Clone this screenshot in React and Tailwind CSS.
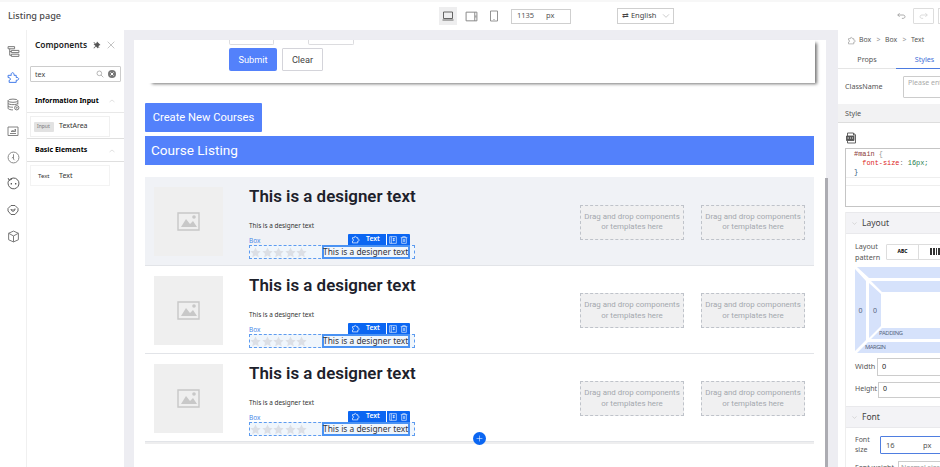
import React from "react";

const S = ({ children, w = 12, h = w, vb = "0 0 24 24", c = "", sw = 1.8 }) => (
  <svg width={w} height={h} viewBox={vb} fill="none" stroke="currentColor" strokeWidth={sw} className={"shrink-0 " + c}>
    {children}
  </svg>
);

const PUZZLE = "M4 7h5c-1-4 5-5 5 0h4v4c5-1 5 6 0 5v5H4v-5c4 0 4-5 0-5z";
const Puzzle = (p) => <S {...p}><path d={PUZZLE} /></S>;

const railIcons = [
  <S w={13} c="text-[#777]"><path d="M2 3h12v4H2zM8 10h14v4H8zM8 17h14v4H8zM5 7v12h3M5 12h3" /></S>,
  <S w={13} c="text-[#3f78e8]"><path d="M2 8h6c-2-6 6-7 5 0h4v4c6-1 6 6 0 5v4H4v-4c4 0 3-5-2-5z" /></S>,
  <S w={13} c="text-[#777]"><ellipse cx="11" cy="5" rx="9" ry="3" /><path d="M2 5v14c0 2 5 3 9 3M20 5v7M2 10c2 3 16 3 18 0M2 15c2 2 6 2 9 2" /><circle cx="18" cy="18" r="4" /><circle cx="18" cy="18" r="1" /></S>,
  <S w={12} c="text-[#777]"><path d="M2 4h20v17H2zM6 17h12M8 13l3-2 2 1 4-4v5z" /></S>,
  <S w={13} c="text-[#888]"><circle cx="12" cy="12" r="10" /><path d="M12 6v9M12 11l-3 2M12 15l2 2" /></S>,
  <S w={13} c="text-[#555]"><path d="M4 6a10 10 0 1 1-1 10C1 11 2 8 4 6zM2 2l2 4 5-2" /><path d="M8 11v3M16 11v3" strokeWidth="2.4" /></S>,
  <S w={12} c="text-[#555]"><path d="M8 3h8l6 6v5l-6 7H8l-6-7V9z" /><path d="M8 10c0 6 8 6 8 0M9 10l3 3 4-4" /></S>,
  <S w={13} c="text-[#777]"><path d="M12 2l9 4v12l-9 4-9-4V6zM3 6l9 5 9-5M12 11v11" /></S>,
];

function Header() {
  return (
    <header className="flex h-[30px] shrink-0 items-center border-t-2 border-[#f7f7f7] bg-white">
      <div className="w-[438px] shrink-0 pl-2 text-[9.1px] font-medium text-[#4a4a4a]">Listing page</div>
      <div className="ml-px flex h-[18px] w-[18px] shrink-0 items-center justify-center bg-[#eeeeef] text-[#555]">
        <S w={12}><path d="M3 4h18v13H3zM1 20h22" /></S>
      </div>
      <S w={13} c="ml-2 text-[#888]"><path d="M2 4h20v16H2zM18 4v16M20 10v4" /></S>
      <S w={12} c="ml-[10px] text-[#888]"><path d="M5 2h14v20H5zM11 19h2" /></S>
      <div className="ml-[11px] flex h-[15px] w-[60px] shrink-0 items-center border border-[#cfcfcf] pl-[5px] text-[7.5px] text-[#555]">
        <span className="w-[29px]">1135</span><span>px</span>
      </div>
      <div className="ml-[46px] flex h-4 w-[57px] shrink-0 items-center border border-[#cfcfcf] pl-1 text-[7.5px] text-[#444]">
        <span className="w-[40px] whitespace-nowrap">⇄ English</span>
        <S w={8} c="text-[#aaa]"><path d="M3 7l9 9 9-9" /></S>
      </div>
      <S w={9} c="ml-[223px] text-[#888]"><path d="M7 3L2 8l5 5M2 8h14c7 0 7 9 0 9h-3" /></S>
      <div className="ml-[7px] flex h-4 w-[21px] shrink-0 items-center justify-center rounded-[1px] border border-[#ddd] text-[#ccc]">
        <S w={9}><path d="M17 3l5 5-5 5M22 8H8c-7 0-7 9 0 9h3" /></S>
      </div>
      <div className="ml-[4px] h-4 w-4 shrink-0 border border-[#ddd]" />
    </header>
  );
}

const Caret = () => <S w={6} c="text-[#bbb]"><path d="M2 16l10-8 10 8" /></S>;

function ComponentsPanel() {
  return (
    <aside className="flex w-[98px] shrink-0 flex-col border-l border-[#f0f0f0] bg-white">
      <div className="mt-[6px] flex h-[17px] items-center pl-2">
        <span className="w-[58px] shrink-0 pt-px text-[8.4px] font-semibold text-[#222]">Components</span>
        <svg width="8" height="8" viewBox="0 0 16 16" fill="#555" className="shrink-0"><path d="M8 1l7 7-3 1-2 3v3L6 11l-4 4-1-1 4-4-4-4h4l2-2zM2 2l11 11-1 1L1 3z" /></svg>
        <S w={8} sw={1.5} c="ml-[6px] text-[#888]"><path d="M2 2l20 20M22 2L2 22" /></S>
      </div>
      <div className="mx-[3px] mt-[13px] flex h-[16px] items-center rounded-[1px] border border-[#ccc] pl-1 text-[7.1px] text-[#444]">
        <span className="w-[61px]">tex</span>
        <S w={8} c="text-[#888]"><circle cx="10" cy="10" r="7" /><path d="M15 15l7 7" /></S>
        <svg width="8" height="8" viewBox="0 0 16 16" className="ml-[4px] shrink-0"><circle cx="8" cy="8" r="8" fill="#777" /><path d="M5 5l6 6M11 5l-6 6" stroke="white" strokeWidth="2" /></svg>
      </div>
      <div className="mt-[6px] flex h-[25px] items-center justify-between border-b border-[#e8e8e8] pl-2 pr-[9px] pt-[2px] text-[7px] font-bold text-black">
        <span className="whitespace-nowrap">Information Input</span><Caret />
      </div>
      <div className="ml-[3px] mt-[3px] flex h-[21px] w-[80px] items-center border border-[#f0f0f0] pl-[3px] text-[7px] text-[#333]">
        <span className="mr-[5px] flex h-[10px] w-5 items-center rounded-[1px] bg-[#e2e2e2] pl-[3px] text-[5px] text-[#777]">Input</span>TextArea
      </div>
      <div className="mt-[1px] flex h-[24px] items-center justify-between border-b border-t border-[#dfdfdf] pl-2 pr-[9px] pt-px text-[7px] font-bold text-black">
        <span>Basic Elements</span><Caret />
      </div>
      <div className="ml-[3px] mt-[3px] flex h-[21px] w-[80px] items-center border border-[#f3f3f3] pl-[7px] pt-px text-[7px] text-[#333]">
        <span className="w-[21px] text-[6px]">Text</span>Text
      </div>
    </aside>
  );
}

const Star = () => <svg width="11" height="11" viewBox="0 0 24 24" fill="#dcdfe5"><path d="M12 1l3.4 7.2 7.8 1-5.7 5.4 1.5 7.8-7-3.8-7 3.8 1.5-7.8L.8 9.2l7.8-1z" /></svg>;

const Drop = () => (
  <div className="flex h-[35px] w-[104px] items-center justify-center border border-dashed border-[#bfc3ca] bg-[#f0f0f1] text-center text-[7.9px] leading-[10.5px] text-[#a4a8ae]">
    <span className="whitespace-nowrap">Drag and drop components<br />or templates here</span>
  </div>
);

function Course({ active }) {
  return (
    <div className={"flex shrink-0 border-b border-[#e2e4e8] pl-[9px] " + (active ? "h-[89px] bg-[#f0f2f6]" : "h-[88px] bg-white")}>
      <div className="mt-[10px] flex h-[69px] w-[69px] shrink-0 items-center justify-center bg-[#efefef]">
        <svg width="23" height="19" viewBox="0 0 23 19" fill="none"><path d="M1 1h21v17H1z" stroke="#c8c8c8" strokeWidth="1.4" /><path d="M4 15l5-8 4 5 3-3 4 6z" fill="#c8c8c8" /><circle cx="17" cy="5" r="1.8" fill="#c8c8c8" /></svg>
      </div>
      <div className="ml-[26px] w-[166px] shrink-0">
        <h2 className="mt-[8px] whitespace-nowrap text-[16.9px] font-semibold leading-[23px] text-[#1d212b]">This is a designer text</h2>
        <p className="mt-[13px] whitespace-nowrap font-['Noto_Sans',sans-serif] text-[6.4px] leading-[10px] text-[#333]">This is a designer text</p>
        <div className="flex h-[14px] items-end justify-between font-['Noto_Sans',sans-serif]">
          <span className="text-[6.5px] leading-[9px] text-[#4a8ae8]">Box</span>
          <div className="mr-[5px] flex h-[11px] w-[62px] items-center rounded-t-[1px] bg-[#0b66f2] text-[6.8px] font-semibold text-white">
            <Puzzle w={9} c="ml-[3px]" />
            <span className="ml-[6px] w-[19px]">Text</span>
            <span className="ml-px h-[11px] w-px bg-white" />
            <S w={8} c="ml-[2px]"><path d="M2 2h20v20H2zM7 2v20M11 8h7M11 13h7M14 6v10" /></S>
            <S w={8} c="ml-[3px]"><path d="M2 5h20M8 5V2h8v3M5 5v17h14V5M10 9v9M14 9v9" /></S>
          </div>
        </div>
        <div className="flex h-[14px] items-center border border-dashed border-[#5c9bf0] bg-[#f0f6fc]">
          <div className="flex w-[72px] shrink-0 gap-[0.5px]"><Star /><Star /><Star /><Star /><Star /></div>
          <div className="flex h-[14px] w-[88px] shrink-0 items-center whitespace-nowrap border-2 border-[#4a92f3] font-['Noto_Sans',sans-serif] text-[8.4px] text-[#30343c]"><span className="-ml-px">This is a designer text</span></div>
        </div>
      </div>
      <div className={"ml-auto mr-[9px] flex gap-[17px] " + (active ? "mt-[27.5px]" : "mt-[27px]")}><Drop /><Drop /></div>
    </div>
  );
}

function Canvas() {
  return (
    <main className="relative mt-[10px] flex w-[692px] shrink-0 flex-col bg-white font-['Roboto',sans-serif]">
      <section className="ml-[14px] h-[43px] w-[667px] shrink-0 bg-white pl-[81px] shadow-[3px_2px_3px_-1px_#777]">
        <div className="flex gap-[34px]">
          <div className="h-[5px] w-[45px] rounded-b-[2px] border border-t-0 border-[#dcdcdf]" />
          <div className="h-[5px] w-[46px] rounded-b-[2px] border border-t-0 border-[#dcdcdf]" />
        </div>
        <div className="mt-[3px] flex gap-[5px] text-[9.2px]">
          <button className="h-[23px] w-[48px] rounded-[2px] bg-[#5381fb] text-white">Submit</button>
          <button className="h-[23px] w-[41px] rounded-[1px] border border-[#d4d4da] bg-white text-[#444]">Clear</button>
        </div>
      </section>
      <button className="ml-[11px] mt-[20px] h-[29px] w-[117px] shrink-0 rounded-[1px] bg-[#5381fb] pt-[2px] text-[11.2px] text-white">Create New Courses</button>
      <div className="ml-[11px] mt-[4px] flex h-[29px] w-[669px] shrink-0 items-center bg-[#5381fb] pl-[6px] text-[13.6px] text-white">Course Listing</div>
      <div className="ml-[11px] mt-[12px] w-[669px] border-b-2 border-[#eeeeef]">
        <Course active /><Course /><Course />
      </div>
      <div className="absolute left-[339px] top-[392px] flex h-[13px] w-[13px] items-center justify-center rounded-full bg-[#0b66f2] text-white">
        <S w={7}><path d="M12 2v20M2 12h20" /></S>
      </div>
      <div className="absolute -right-[2px] top-[138px] h-[340px] w-[3px] bg-[#acacb2]" />
    </main>
  );
}

const Section = ({ children }) => (
  <div className="flex h-[22px] shrink-0 items-center border-b border-t border-[#e9e9ec] bg-[#f3f3f6] pl-[6px] pt-px text-[8.5px] text-[#444]">
    <S w={5} c="mr-[5px] text-[#aaa]"><path d="M2 7l10 9 10-9" /></S>{children}
  </div>
);

function BoxModel() {
  return (
    <svg width="110" height="86" viewBox="0 0 110 86" className="ml-[9px] mt-[4px] shrink-0">
      <path d="M2 0H110V11H14zM0 2L11 14V73L0 84zM2 86L13 75H110V86z" fill="#d6e2fb" />
      <path d="M16 14H110V25H27zM14 16L26 27V59L14 71zM16 72L27 61H110V72z" fill="#d6e2fb" />
      <g fill="#56657e" fontFamily="Noto Sans, sans-serif">
        <text x="3.5" y="46" fontSize="7">0</text>
        <text x="18" y="46" fontSize="7">0</text>
        <text x="24" y="68" fontSize="5.800" textLength="24">PADDING</text>
        <text x="10" y="82" fontSize="5.800" textLength="21">MARGIN</text>
      </g>
    </svg>
  );
}

function RightPanel() {
  return (
    <aside className="flex w-[110px] shrink-0 flex-col bg-white text-[7.5px] text-[#555]">
      <div className="flex h-[20px] shrink-0 items-center pl-[9px] pt-px text-[6.9px]">
        <Puzzle w={9} c="mr-[3px] text-[#999]" />
        <span className="w-[13px]">Box</span><span className="w-[13px] text-center text-[#999]">&gt;</span>
        <span className="w-[13px]">Box</span><span className="w-[13px] text-center text-[#999]">&gt;</span><span>Text</span>
      </div>
      <div className="flex h-[19px] shrink-0 text-[7.2px]">
        <div className="flex w-[58px] shrink-0 items-center justify-center border-b border-[#e5e5e5]">Props</div>
        <div className="flex w-[57px] shrink-0 items-center justify-center border-b border-[#4c7be0] text-[#3f70d8]">Styles</div>
      </div>
      <div className="flex h-[35px] shrink-0 items-center pl-[7px] text-[7.2px]">
        <span className="w-[58px] shrink-0">ClassName</span>
        <div className="h-[22px] w-[60px] shrink-0 whitespace-nowrap rounded-[1px] border border-[#ccc] pl-[4px] pt-px text-[7px] text-[#aaa]">Please enter</div>
      </div>
      <div className="flex h-[19px] shrink-0 items-center border-b border-[#ddd] bg-[#f2f2f3] pl-[7px] pt-px text-[7.2px]">Style</div>
      <svg width="11" height="12" viewBox="0 0 22 24" fill="none" stroke="#555" strokeWidth="1.8" className="ml-[8px] mt-[9px] shrink-0"><path d="M3 8V2h12l4 4v16H3v-4M15 2v4h4" /><path d="M1 8h15v9H1z" fill="#555" /><path d="M3 12h3M8 12h2M12 12h2" stroke="#fff" /></svg>
      <div className="ml-[7px] mt-[3.500px] h-[59px] w-[120px] shrink-0 border border-[#c5c5c5] font-['Liberation_Mono',monospace] text-[6.9px] leading-[9px]">
        <div className="h-[29px] whitespace-pre border-b border-[#eee] pl-[8px] pt-px">
          <div className="text-[#8b3a3a]">#main <span className="text-[#999]">{"{"}</span></div>
          <div className="text-[#d22]">{"  font-size"}<span className="text-[#777]">: </span><span className="text-[#277d4f]">16px;</span></div>
          <div className="text-[#357]">{"}"}</div>
        </div>
        <div className="h-[8px] border-b border-[#eee]" />
      </div>
      <div className="ml-[7px] mt-[5px] flex flex-1 flex-col border-l border-[#eee]">
        <Section>Layout</Section>
        <div className="mt-[7px] flex h-[22px] shrink-0 items-center pl-[9px] text-[7.2px] leading-[10.5px]">
          <span className="w-[31px] shrink-0">Layout<br />pattern</span>
          <div className="flex h-4 w-[80px] shrink-0 items-center rounded-[1px] border border-[#ddd]">
            <span className="flex h-full w-8 items-center justify-center border-r border-[#ddd] text-[5px] font-bold text-black">ABC</span>
            <svg width="12" height="7" viewBox="0 0 12 7" className="ml-[11px]"><path d="M0 0h2v7H0zM3 0h2v7H3zM6 0h1v7H6zM8 0h2v7H8zM11 0h1v7h-1z" fill="#333" /></svg>
          </div>
        </div>
        <BoxModel />
        <div className="mt-[5px] flex h-[18px] shrink-0 items-center pl-[9px] text-[7.3px]"><span className="w-[22px] shrink-0">Width</span><div className="flex h-[18px] w-20 shrink-0 items-center border border-[#ccc] pl-[4px] text-[#222]">0</div></div>
        <div className="mt-[6px] flex h-[16px] shrink-0 items-center pl-[9px] text-[7px]"><span className="w-[23px] shrink-0">Height</span><div className="flex h-4 w-20 shrink-0 items-center border border-[#ccc] pl-[4px] text-[#222]">0</div></div>
        <div className="mt-[8px]"><Section>Font</Section></div>
        <div className="mt-[7px] flex h-[20px] shrink-0 items-center pl-[9px] text-[7px] leading-[10px]">
          <span className="w-[25px] shrink-0">Font<br />size</span>
          <div className="flex h-[18px] w-[80px] shrink-0 items-center rounded-[1px] border border-[#4f7ee0] pl-[5px] text-[7.500px]"><span className="w-[37px]">16</span>px</div>
        </div>
        <div className="mt-[6px] flex h-[16px] shrink-0 items-center pl-[9px] text-[7px]">
          <span className="w-[43px] shrink-0">Font weight</span><div className="flex h-4 w-20 shrink-0 items-center border border-[#ccc] pl-[2px] text-[#999]">Normal size</div>
        </div>
      </div>
    </aside>
  );
}

export default function App() {
  return (
    <div className="flex h-[467px] w-[940px] flex-col overflow-hidden bg-[#ededf2] font-['Noto_Sans',sans-serif]">
      <Header />
      <div className="flex h-[437px]">
        <nav className="flex w-[26px] shrink-0 flex-col items-center bg-white pt-[8px]">
          {railIcons.map((icon, i) => <div key={i} className="flex h-[26.500px] w-6 shrink-0 items-center justify-center">{icon}</div>)}
        </nav>
        <ComponentsPanel />
        <div className="w-[10px] shrink-0" />
        <Canvas />
        <div className="w-[12px] shrink-0" />
        <RightPanel />
      </div>
    </div>
  );
}
